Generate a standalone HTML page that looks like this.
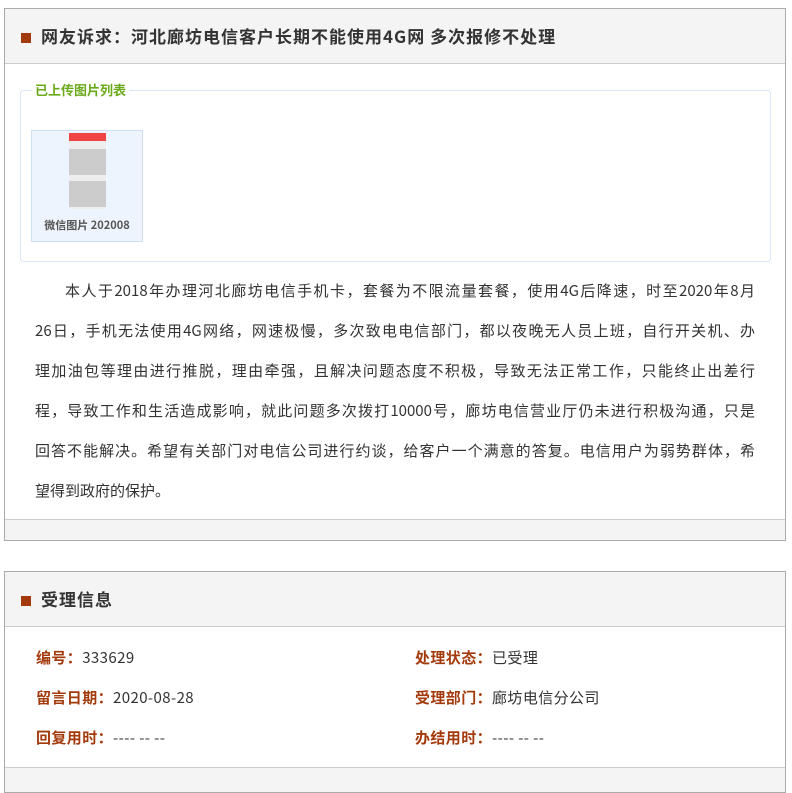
<!DOCTYPE html>
<html><head><meta charset="utf-8"><style>
html,body{margin:0;background:#fff;font-family:"Noto Sans CJK SC","Liberation Sans",sans-serif;overflow:hidden;height:775px;}
.box{position:absolute;left:4px;width:780px;border:1px solid #aaa;background:#fff;overflow:hidden;}
.hd{background:#f4f4f4;border-bottom:1px solid #ccc;height:54px;position:relative;}
.hd i{position:absolute;left:16px;top:24px;width:10px;height:10px;background:#a33a0c;}
.hd b{position:absolute;left:36px;top:15px;font-size:17px;color:#333;line-height:24px;letter-spacing:1px;}
.fs{position:absolute;left:15px;top:26px;width:749px;height:170px;border:1px solid #dbe6f4;border-radius:4px;}
.fs .lg{position:absolute;left:11px;top:-10px;background:#fff;padding:0 3px;color:#6aaa1a;font-size:13px;font-weight:bold;line-height:18px;}
.th{position:absolute;left:10px;top:39px;width:110px;height:110px;background:#eef4fd;border:1px solid #cddff3;}
.ph{position:absolute;left:37px;top:2px;width:37px;height:76px;background:#eee;}
.th span{position:absolute;left:0;right:0;top:86px;text-align:center;font-size:11px;font-weight:bold;color:#555;}
.txt{position:absolute;left:30px;top:262px;width:720px;font-size:15px;line-height:40px;color:#333;}
.txt div{white-space:nowrap;text-align:justify;text-align-last:justify;}
.txt div.l{text-align-last:left;}
.ft{position:absolute;left:0;right:0;bottom:0;height:20px;background:#f4f4f4;border-top:1px solid #ccc;}
.row{position:absolute;font-size:15px;color:#333;line-height:20px;letter-spacing:0.4px;}
.row b{color:#a33a0c;font-weight:bold;}
</style></head><body>
<div class="box" style="top:8px;height:531px;">
<div class="hd"><i></i><b>网友诉求：河北廊坊电信客户长期不能使用4G网 多次报修不处理</b></div>
<div class="fs" style="top:81px;"><div class="lg">已上传图片列表</div>
<div class="th"><div class="ph"><div style="height:8px;background:#e44"></div><div style="height:26px;margin-top:8px;background:#ccc"></div><div style="height:26px;margin-top:6px;background:#ccc"></div></div><span>微信图片 202008</span></div></div>
<div class="txt">
<div style="padding-left:30px">本人于2018年办理河北廊坊电信手机卡，套餐为不限流量套餐，使用4G后降速，时至2020年8月</div>
<div>26日，手机无法使用4G网络，网速极慢，多次致电电信部门，都以夜晚无人员上班，自行开关机、办</div>
<div>理加油包等理由进行推脱，理由牵强，且解决问题态度不积极，导致无法正常工作，只能终止出差行</div>
<div>程，导致工作和生活造成影响，就此问题多次拨打10000号，廊坊电信营业厅仍未进行积极沟通，只是</div>
<div>回答不能解决。希望有关部门对电信公司进行约谈，给客户一个满意的答复。电信用户为弱势群体，希</div>
<div class="l">望得到政府的保护。</div>
</div>
<div class="ft"></div>
</div>
<div class="box" style="top:571px;height:220px;">
<div class="hd"><i></i><b>受理信息</b></div>
<div class="row" style="left:31px;top:76px;"><b>编号：</b>333629</div>
<div class="row" style="left:31px;top:116px;"><b>留言日期：</b>2020-08-28</div>
<div class="row" style="left:31px;top:156px;"><b>回复用时：</b>---- -- --</div>
<div class="row" style="left:410px;top:76px;"><b>处理状态：</b>已受理</div>
<div class="row" style="left:410px;top:116px;"><b>受理部门：</b>廊坊电信分公司</div>
<div class="row" style="left:410px;top:156px;"><b>办结用时：</b>---- -- --</div>
<div style="position:absolute;left:0;right:0;top:195px;height:30px;background:#f4f4f4;border-top:1px solid #ccc;"></div>
</div>
</body></html>
